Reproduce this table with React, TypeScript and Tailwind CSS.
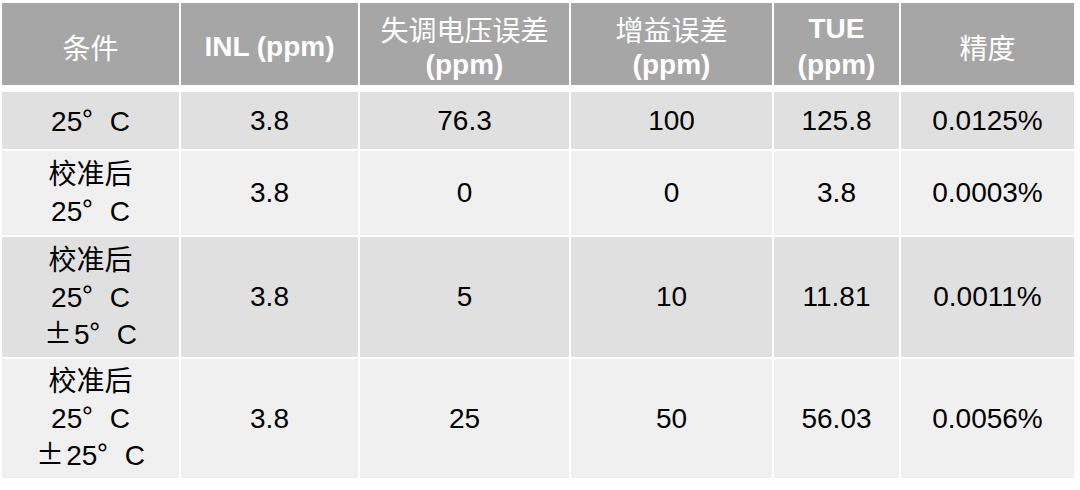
import type { ReactNode } from "react";

const latin = "font-['Liberation_Sans','Arial','Noto_Sans_CJK_SC',sans-serif]";

// ° and ± are set in the CJK face so they take the wide form seen in the slide
function Deg() {
  return <span className="font-['Noto_Sans_CJK_SC',sans-serif]">°</span>;
}

function Temp({ v, pm }: { v: string; pm?: boolean }) {
  return (
    <span className="whitespace-nowrap">
      {pm && <span className="mr-[2px] font-['Noto_Sans_CJK_SC',sans-serif]">±</span>}
      {v}
      <Deg />
      <span className="ml-[17px]">C</span>
    </span>
  );
}

type Row = { cond: ReactNode; cells: string[]; tone: "dark" | "light" };

const rows: Row[] = [
  { cond: <Temp v="25" />, cells: ["3.8", "76.3", "100", "125.8", "0.0125%"], tone: "dark" },
  {
    cond: (
      <>
        <span>校准后</span>
        <Temp v="25" />
      </>
    ),
    cells: ["3.8", "0", "0", "3.8", "0.0003%"],
    tone: "light",
  },
  {
    cond: (
      <>
        <span>校准后</span>
        <Temp v="25" />
        <Temp v="5" pm />
      </>
    ),
    cells: ["3.8", "5", "10", "11.81", "0.0011%"],
    tone: "dark",
  },
  {
    cond: (
      <>
        <span>校准后</span>
        <Temp v="25" />
        <Temp v="25" pm />
      </>
    ),
    cells: ["3.8", "25", "50", "56.03", "0.0056%"],
    tone: "light",
  },
];

const cols = "grid-cols-[177px_177px_209px_201px_125px_173px]";

function Head({ children }: { children: ReactNode }) {
  return (
    <div className="flex flex-col items-center justify-center bg-[#a6a6a6] pt-[6px] text-center text-[28px] leading-[36px] text-white">
      {children}
    </div>
  );
}

const zh = "font-['Noto_Sans_CJK_SC',sans-serif] font-normal";

export default function App() {
  return (
    <div className={`min-h-screen bg-white pl-[2px] pt-[3px] ${latin}`}>
      <div className={`mb-[7px] grid h-[82px] gap-x-[2px] ${cols}`}>
        <Head>
          <span className={zh}>条件</span>
        </Head>
        <Head>
          <span className="font-bold">INL (ppm)</span>
        </Head>
        <Head>
          <span className={zh}>失调电压误差</span>
          <span className="font-bold">(ppm)</span>
        </Head>
        <Head>
          <span className={zh}>增益误差</span>
          <span className="font-bold">(ppm)</span>
        </Head>
        <Head>
          <span className="font-bold">TUE</span>
          <span className="font-bold">(ppm)</span>
        </Head>
        <Head>
          <span className={zh}>精度</span>
        </Head>
      </div>

      <div className={`grid grid-rows-[57px_84px_120px_119px] gap-[2px] ${cols}`}>
        {rows.map((r, i) => {
          const bg = r.tone === "dark" ? "bg-[#e0e0e0]" : "bg-[#f0f0f0]";
          return [
            <div
              key={`c${i}`}
              className={`flex flex-col items-center justify-center text-center text-[28px] leading-[35px] text-black ${bg}`}
            >
              {r.cond}
            </div>,
            ...r.cells.map((c, j) => (
              <div
                key={`${i}-${j}`}
                className={`flex items-center justify-center text-[28px] text-black ${bg}`}
              >
                {c}
              </div>
            )),
          ];
        })}
      </div>
    </div>
  );
}
